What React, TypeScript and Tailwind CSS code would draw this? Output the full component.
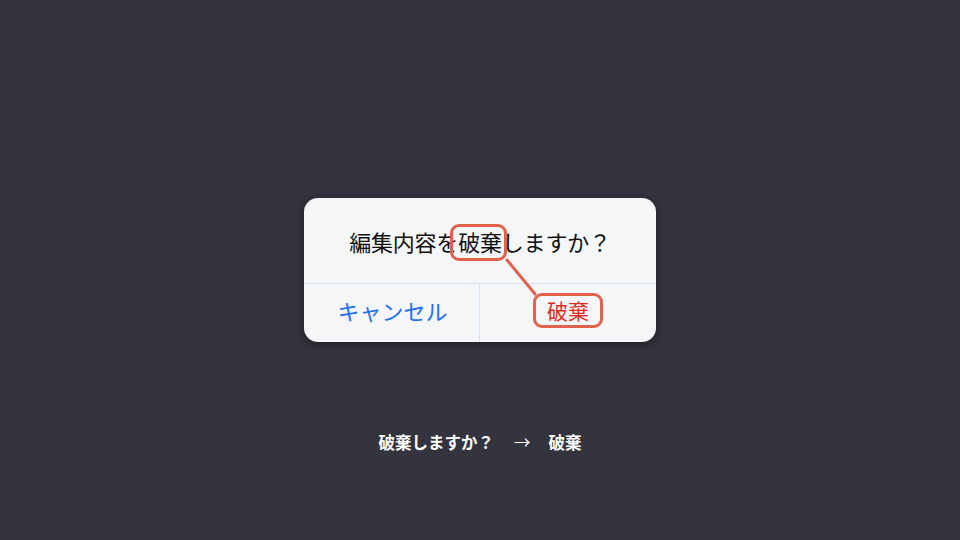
const jp = { fontFamily: '"Noto Sans CJK JP", "Noto Sans", sans-serif' };

export default function App() {
  return (
    <div className="w-[960px] h-[540px] bg-[#34343f] flex flex-col items-center pt-[198px]" style={jp}>
      <div className="relative w-[352px] h-[144px] rounded-[14px] bg-[#f5f6f8] shadow-[0_2px_10px_rgba(0,0,0,0.45)] flex flex-col">
        <div className="h-[86px] flex items-center justify-center pt-[2px] text-[22px] text-[#111] tracking-[-0.2px] border-b border-[#dde0f0]">
          <span>編集内容を</span>
          <span className="relative">
            破棄
            <span className="absolute -left-[8px] -right-[5px] -top-[1px] -bottom-[3px] border-[3px] border-[#e0624c] rounded-[9px]" />
          </span>
          <span>しますか？</span>
        </div>
        <div className="flex-1 flex">
          <button className="w-[176px] flex items-center justify-center pb-[5px] text-[22px] text-[#1f6ff0] border-r border-[#dde0f0]">
            <span className="translate-x-[1px]">キャンセル</span>
          </button>
          <button className="flex-1 flex items-center justify-center pb-[5px]">
            <span className="text-[21px] text-[#e02a1f] border-[3px] border-[#e0624c] rounded-[9px] px-[11px] leading-[28px] pb-[1px]">
              破棄
            </span>
          </button>
        </div>
        <svg className="absolute left-0 top-0 pointer-events-none" width="352" height="144">
          <line x1="203" y1="62" x2="231" y2="96" stroke="#e0624c" strokeWidth="3" strokeLinecap="round" />
        </svg>
      </div>
      <div className="mt-[88px] flex items-center text-[16.5px] font-bold text-white">
        <span>破棄しますか？</span>
        <span className="ml-[20px] mr-[18px] font-normal">→</span>
        <span>破棄</span>
      </div>
    </div>
  );
}
